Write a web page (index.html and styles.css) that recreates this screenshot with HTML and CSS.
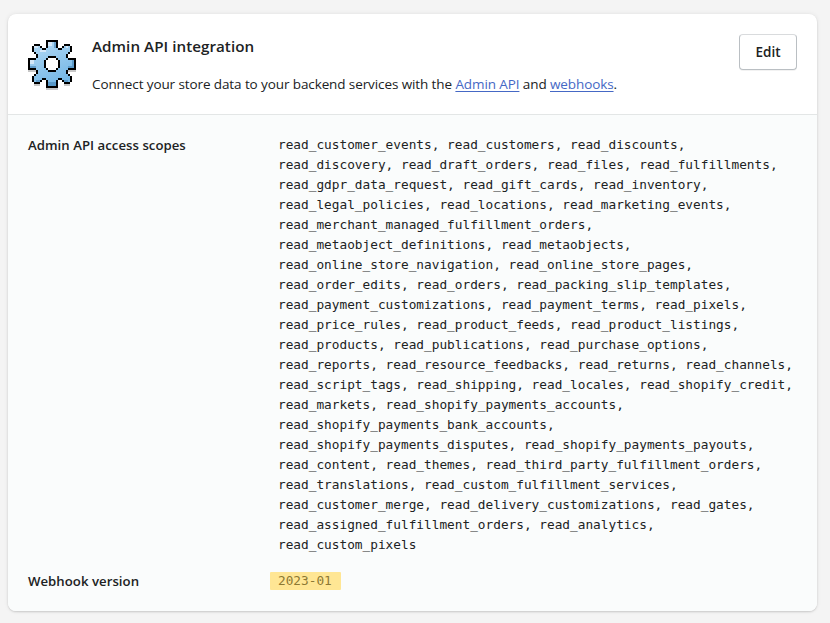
FILE: index.html
```html
<!DOCTYPE html>
<html lang="en">
<head>
<meta charset="utf-8">
<title>Admin API integration</title>
<link rel="stylesheet" href="styles.css">
</head>
<body>
<main class="card">
  <header class="head">
    <svg class="gear" viewBox="0 0 24 24" shape-rendering="crispEdges" aria-hidden="true">
      <defs>
        <linearGradient id="metal" x1="0" y1="0" x2=".5" y2="1"><stop offset="0" stop-color="#b5daf5"/><stop offset="1" stop-color="#76b8e6"/></linearGradient>
        <g id="quarter">
          <path d="M9 0h3v1h-3zM9 1h1v3h-1zM7 4h2v1h-2zM6 3h1v1h-1zM3 2h3v1h-3zM2 3h1v3h-1zM3 6h1v1h-1zM4 7h1v2h-1zM0 9h4v1h-4zM0 10h1v2h-1z"/>
          <path d="M10 8h2v1h-2zM9 9h1v1h-1zM8 10h1v2h-1z"/>
        </g>
      </defs>
      <path fill="#000" fill-opacity=".22" d="M0 15h4v1h-4zM20 15h4v1h-4zM3 22h3v1h-3zM18 22h3v1h-3zM9 24h6v1h-6z"/>
      <path fill="url(#metal)" d="M9 1h6v3h3v-1h3v3h-1v1v2h4v6h-4v3h1v3h-3v-1h-3v3h-6v-3h-3v1h-3v-3h1v-3h-4v-6h4v-3h-1v-3h3v1h3z"/>
      <path fill="#d4e7f8" d="M10 1h2v2h-2zM3 3h2v1h-2zM1 10h2v2h-2zM19 3h1v1h-1zM6 5h3v1h-3z"/>
      <path fill="#4484b5" d="M13 1h1v3h-1zM10 21h4v2h-4zM1 13h3v1h-3zM20 13h3v1h-3zM22 10h1v4h-1zM18 20h2v1h-2zM4 20h2v1h-2z" fill-opacity=".6"/>
      <path fill="#fff" d="M10 9h4v1h1v4h-1v1h-4v-1h-1v-4h1z"/>
      <use href="#quarter"/>
      <use href="#quarter" transform="matrix(-1 0 0 1 24 0)"/>
      <use href="#quarter" transform="matrix(1 0 0 -1 0 24)"/>
      <use href="#quarter" transform="matrix(-1 0 0 -1 24 24)"/>
    </svg>
    <div class="intro">
      <h1>Admin API integration</h1>
      <p>Connect your store data to your backend services with the <a href="#">Admin API</a> and <a href="#">webhooks</a>.</p>
    </div>
    <button class="edit">Edit</button>
  </header>
  <section class="details">
    <h2>Admin API access scopes</h2>
    <div class="scopes">read_customer_events, read_customers, read_discounts,
read_discovery, read_draft_orders, read_files, read_fulfillments,
read_gdpr_data_request, read_gift_cards, read_inventory,
read_legal_policies, read_locations, read_marketing_events,
read_merchant_managed_fulfillment_orders,
read_metaobject_definitions, read_metaobjects,
read_online_store_navigation, read_online_store_pages,
read_order_edits, read_orders, read_packing_slip_templates,
read_payment_customizations, read_payment_terms, read_pixels,
read_price_rules, read_product_feeds, read_product_listings,
read_products, read_publications, read_purchase_options,
read_reports, read_resource_feedbacks, read_returns, read_channels,
read_script_tags, read_shipping, read_locales, read_shopify_credit,
read_markets, read_shopify_payments_accounts,
read_shopify_payments_bank_accounts,
read_shopify_payments_disputes, read_shopify_payments_payouts,
read_content, read_themes, read_third_party_fulfillment_orders,
read_translations, read_custom_fulfillment_services,
read_customer_merge, read_delivery_customizations, read_gates,
read_assigned_fulfillment_orders, read_analytics,
read_custom_pixels</div>
    <h2>Webhook version</h2>
    <div><span class="version">2023-01</span></div>
  </section>
</main>
</body>
</html>
```
FILE: styles.css
```css
* { box-sizing: border-box; }
body {
  margin: 0;
  height: 623px;
  padding: 14px 13px 12px 8px;
  overflow: hidden;
  background: #f4f4f4;
  color: #202223;
  font: 14px/20px "Open Sans", sans-serif;
}
h1, h2, p { margin: 0; }
.card {
  height: 597px;
  border-radius: 8px;
  overflow: hidden;
  background: #fff;
  box-shadow: 0 0 5px rgba(23, 24, 24, .07), 0 1px 2px rgba(0, 0, 0, .15);
}
.head {
  display: flex;
  height: 101px;
  padding: 20px;
  border-bottom: 1px solid #e3e6e6;
}
.gear { width: 48px; height: 48px; margin: 6px 16px 0 0; flex: none; overflow: visible; }
.intro { flex: 1; white-space: nowrap; }
h1 { font-size: 15.2px; line-height: 25px; font-weight: 550; letter-spacing: .04px; }
.intro p { margin-top: 15px; font-size: 13.5px; letter-spacing: -.1px; }
a { color: #4568c5; text-decoration: underline; text-underline-offset: 2px; }
.edit {
  width: 58px;
  height: 36px;
  padding: 0 0 1px;
  border: 1px solid #babfc3;
  border-top-color: #d9dbdd;
  border-radius: 4px;
  background: #fff;
  box-shadow: 0 1px 0 rgba(0, 0, 0, .05);
  color: #202223;
  font: 550 13.5px/20px "Open Sans", sans-serif;
}
.details {
  display: grid;
  grid-template-columns: 250px 1fr;
  row-gap: 16px;
  height: 496px;
  padding: 20px 0 20px 20px;
  align-content: start;
  background: #fafcfc;
}
h2 { font-size: 13.2px; line-height: 21px; font-weight: 550; letter-spacing: .03px; }
.scopes { white-space: pre; font: 12.785px/20px "DejaVu Sans Mono", monospace; }
.version {
  display: block;
  width: 71px;
  height: 18px;
  margin: 1px 0 0 -8px;
  padding-left: 8px;
  border-radius: 1px;
  background: #ffe694;
  color: #8c7833;
  font: 12.785px/17px "DejaVu Sans Mono", monospace;
}
```
